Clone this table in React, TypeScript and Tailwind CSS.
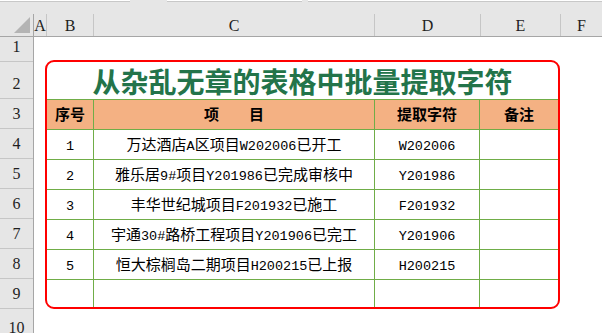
const rows = [
  { no: '1', name: '万达酒店A区项目W202006已开工', code: 'W202006' },
  { no: '2', name: '雅乐居9#项目Y201986已完成审核中', code: 'Y201986' },
  { no: '3', name: '丰华世纪城项目F201932已施工', code: 'F201932' },
  { no: '4', name: '宇通30#路桥工程项目Y201906已完工', code: 'Y201906' },
  { no: '5', name: '恒大棕榈岛二期项目H200215已上报', code: 'H200215' },
  { no: '', name: '', code: '' },
]

// 行号列的高度
const rowHeights = [
  { label: '1', h: 'h-[25px]' },
  { label: '2', h: 'h-[37px]' },
  { label: '3', h: 'h-[30px]' },
  { label: '4', h: 'h-[30px]' },
  { label: '5', h: 'h-[30px]' },
  { label: '6', h: 'h-[30px]' },
  { label: '7', h: 'h-[30px]' },
  { label: '8', h: 'h-[30px]' },
  { label: '9', h: 'h-[30px]' },
  { label: '10', h: 'h-[34px]' },
]

const cols = [
  { label: 'A', w: 'w-[13px]' },
  { label: 'B', w: 'w-[47px]' },
  { label: 'C', w: 'w-[281px]' },
  { label: 'D', w: 'w-[106px]' },
  { label: 'E', w: 'w-[80px]' },
]

const cjk = { fontFamily: '"Noto Sans CJK SC", sans-serif' }
const serif = { fontFamily: '"Liberation Serif", serif' }
const mono = { fontFamily: '"Liberation Mono", monospace' }

// 中文用黑体，英文数字用等宽字体（模拟宋体半角）
function Mixed({ text }: { text: string }) {
  const parts = text.match(/[\x00-\x7f]+|[^\x00-\x7f]+/g) || []
  return (
    <span className="whitespace-pre">
      {parts.map((p, i) =>
        /^[\x00-\x7f]/.test(p) ? (
          <span key={i} className="text-[13.5px]" style={mono}>
            {p}
          </span>
        ) : (
          <span key={i}>{p}</span>
        )
      )}
    </span>
  )
}

export default function App() {
  return (
    <div className="w-[602px] h-[333px] overflow-hidden bg-white text-black">
      {/* 编辑栏残留 */}
      <div className="h-[14px] bg-[#e6e6e6] flex items-start">
        <div className="h-[2px] w-[130px] bg-white border-b border-[#c8c8c8]" />
        <div className="h-[2px] w-[37px]" />
        <div className="h-[2px] w-[135px] bg-white border-b border-[#c8c8c8]" />
        <div className="h-[2px] w-[6px]" />
        <div className="h-[2px] flex-1 bg-white border-b border-[#c8c8c8]" />
      </div>

      {/* 列标 */}
      <div className="h-[23px] flex bg-[#e6e6e6] border-b border-[#a6a6a6] text-[16px] text-[#1f1f1f]" style={serif}>
        <div className="w-[34px] border-r border-[#a6a6a6] flex items-end justify-end pr-[3px] pb-[3px]">
          <svg width="16" height="16" viewBox="0 0 16 16">
            <polygon points="16,0 16,16 0,16" fill="#b4b4b4" />
          </svg>
        </div>
        {cols.map((c) => (
          <div key={c.label} className={`${c.w} border-r border-[#c6c6c6] flex items-center justify-center pt-[2px]`}>
            {c.label}
          </div>
        ))}
        <div className="flex-1 flex items-center justify-center pt-[2px]">F</div>
      </div>

      <div className="flex">
        {/* 行号 */}
        <div className="w-[34px] bg-[#e6e6e6] border-r border-[#a6a6a6] text-[16px] text-[#1f1f1f]" style={serif}>
          {rowHeights.map((r) => (
            <div key={r.label} className={`${r.h} border-b border-[#c6c6c6] flex items-end justify-center pb-[2px]`}>
              {r.label}
            </div>
          ))}
        </div>

        <div className="flex-1 pt-[23px] pl-[11px]">
          <div className="w-[515px] border-2 border-[#ff0000] rounded-[9px] overflow-hidden" style={cjk}>
            {/* 标题 */}
            <div className="h-[37px] flex items-center justify-center text-[28px] font-bold text-[#23744a] leading-none">
              从杂乱无章的表格中批量提取字符
            </div>

            {/* 表头 */}
            <div className="h-[30px] flex bg-[#f4b183] border-t border-[#70ad47] text-[15px] font-bold">
              <div className="w-[46px] flex items-center justify-center">序号</div>
              <div className="w-[281px] border-l border-[#70ad47] flex items-center justify-center whitespace-pre">
                项{'\u3000\u3000'}目
              </div>
              <div className="w-[105px] border-l border-[#70ad47] flex items-center justify-center">提取字符</div>
              <div className="w-[79px] border-l border-[#70ad47] flex items-center justify-center">备注</div>
            </div>

            {/* 数据行 */}
            {rows.map((r, i) => (
              <div
                key={i}
                className={`${i === rows.length - 1 ? 'h-[28px]' : 'h-[30px]'} flex border-t border-[#70ad47] text-[15px]`}
              >
                <div className="w-[46px] flex items-center justify-center pt-[1px]">
                  <Mixed text={r.no} />
                </div>
                <div className="w-[281px] border-l border-[#70ad47] flex items-center justify-center pt-[1px]">
                  <Mixed text={r.name} />
                </div>
                <div className="w-[105px] border-l border-[#70ad47] flex items-center justify-center pt-[1px]">
                  <Mixed text={r.code} />
                </div>
                <div className="w-[79px] border-l border-[#70ad47]" />
              </div>
            ))}
          </div>
        </div>
      </div>
    </div>
  )
}
